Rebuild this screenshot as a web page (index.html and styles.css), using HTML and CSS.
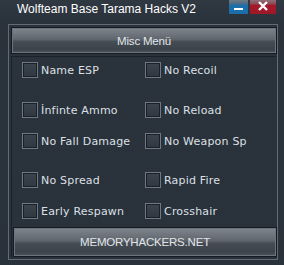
FILE: index.html
```html
<!DOCTYPE html>
<html>
<head>
<meta charset="utf-8">
<link rel="stylesheet" href="styles.css">
</head>
<body>
<div class="window">
  <div class="titlebar">
    <span class="title">Wolfteam Base Tarama Hacks V2</span>
    <div class="wbtns">
      <div class="wbtn min"><svg width="19" height="14" viewBox="0 0 19 14"><rect x="5" y="8" width="9" height="2" fill="#fff"/></svg></div>
      <div class="wbtn close"><svg width="26" height="14" viewBox="0 0 26 14"><path d="M9 2 L17 10 M17 2 L9 10" stroke="#fff" stroke-width="2.4"/></svg></div>
    </div>
  </div>
  <div class="frame">
    <div class="btn misc">Misc Menü</div>
    <div class="group">
      <div class="grid">
        <label class="opt"><span class="box"></span><span>Name ESP</span></label>
        <label class="opt"><span class="box"></span><span>No Recoil</span></label>
        <label class="opt"><span class="box"></span><span>İnfinte Ammo</span></label>
        <label class="opt"><span class="box"></span><span>No Reload</span></label>
        <label class="opt"><span class="box"></span><span>No Fall Damage</span></label>
        <label class="opt"><span class="box"></span><span>No Weapon Sp</span></label>
        <label class="opt"><span class="box"></span><span>No Spread</span></label>
        <label class="opt"><span class="box"></span><span>Rapid Fire</span></label>
        <label class="opt"><span class="box"></span><span>Early Respawn</span></label>
        <label class="opt"><span class="box"></span><span>Crosshair</span></label>
      </div>
      <div class="btn mh">MEMORYHACKERS.NET</div>
    </div>
  </div>
</div>
</body>
</html>
```
FILE: styles.css
```css
html, body {
  margin: 0;
  padding: 0;
}
body {
  width: 284px;
  height: 265px;
  overflow: hidden;
  background: #2a323c;
}
.window {
  width: 284px;
  height: 265px;
  background: linear-gradient(#303842, #2a323c 22px, #29313b);
  display: flex;
  flex-direction: column;
}
.titlebar {
  height: 24px;
  display: flex;
  justify-content: space-between;
  align-items: flex-start;
}
.title {
  font-family: "Liberation Sans", Arial, sans-serif;
  font-size: 12px;
  color: #ffffff;
  margin-left: 17px;
  margin-top: 2px;
  line-height: 14px;
}
.wbtns {
  display: flex;
  gap: 2px;
  margin-right: 8px;
}
.wbtn {
  height: 14px;
  display: flex;
}
.wbtn.min {
  width: 19px;
  background: linear-gradient(#6d7a86, #4c6b85 4px, #1a70ac 5px, #1b6ea8);
}
.wbtn.close {
  width: 26px;
  background: linear-gradient(#8e6e76, #8a4b57 4px, #a2192b 5px, #9e1828);
}
.frame {
  margin-left: 8px;
  width: 270px;
  height: 236px;
  box-sizing: border-box;
  border: 1px solid #626b75;
  padding: 2px 1px 2px 1px;
  display: flex;
  flex-direction: column;
}
.btn {
  box-sizing: border-box;
  border: 1px solid #161b21;
  box-shadow: inset 0 0 0 1px #6c737b;
  background: linear-gradient(#80868e, #5f666e 45%, #454c54 55%, #3c434a 85%, #4d545b);
  color: #e2e6ea;
  font-family: "Liberation Sans", Arial, sans-serif;
  font-size: 11.5px;
  letter-spacing: -0.2px;
  display: flex;
  align-items: center;
  justify-content: center;
}
.misc {
  margin-left: 1px;
  width: 266px;
  height: 27px;
}
.group {
  margin-top: 2px;
  margin-left: 1px;
  flex: 1;
  border-left: 1px solid #1b2128;
  border-top: 1px solid #1b2128;
  display: flex;
  flex-direction: column;
}
.grid {
  flex: 1;
  display: grid;
  grid-template-columns: 123px 1fr;
  grid-template-rows: 40px 31px 39px 31px 1fr;
  padding: 5px 0 0 10px;
  align-items: start;
}
.opt {
  display: flex;
  align-items: center;
  height: 16px;
  font-family: "DejaVu Sans", Verdana, sans-serif;
  font-size: 11px;
  letter-spacing: 0.2px;
  color: #dce0e5;
  white-space: nowrap;
}
.box {
  width: 16px;
  height: 16px;
  box-sizing: border-box;
  border: 1px solid #6f7882;
  box-shadow: inset 0 0 0 1px #1a2026;
  background: linear-gradient(#3c444e, #2f3740);
  margin-right: 3px;
  flex: none;
}
.mh {
  margin-left: 1px;
  width: 264px;
  height: 30px;
}
```
